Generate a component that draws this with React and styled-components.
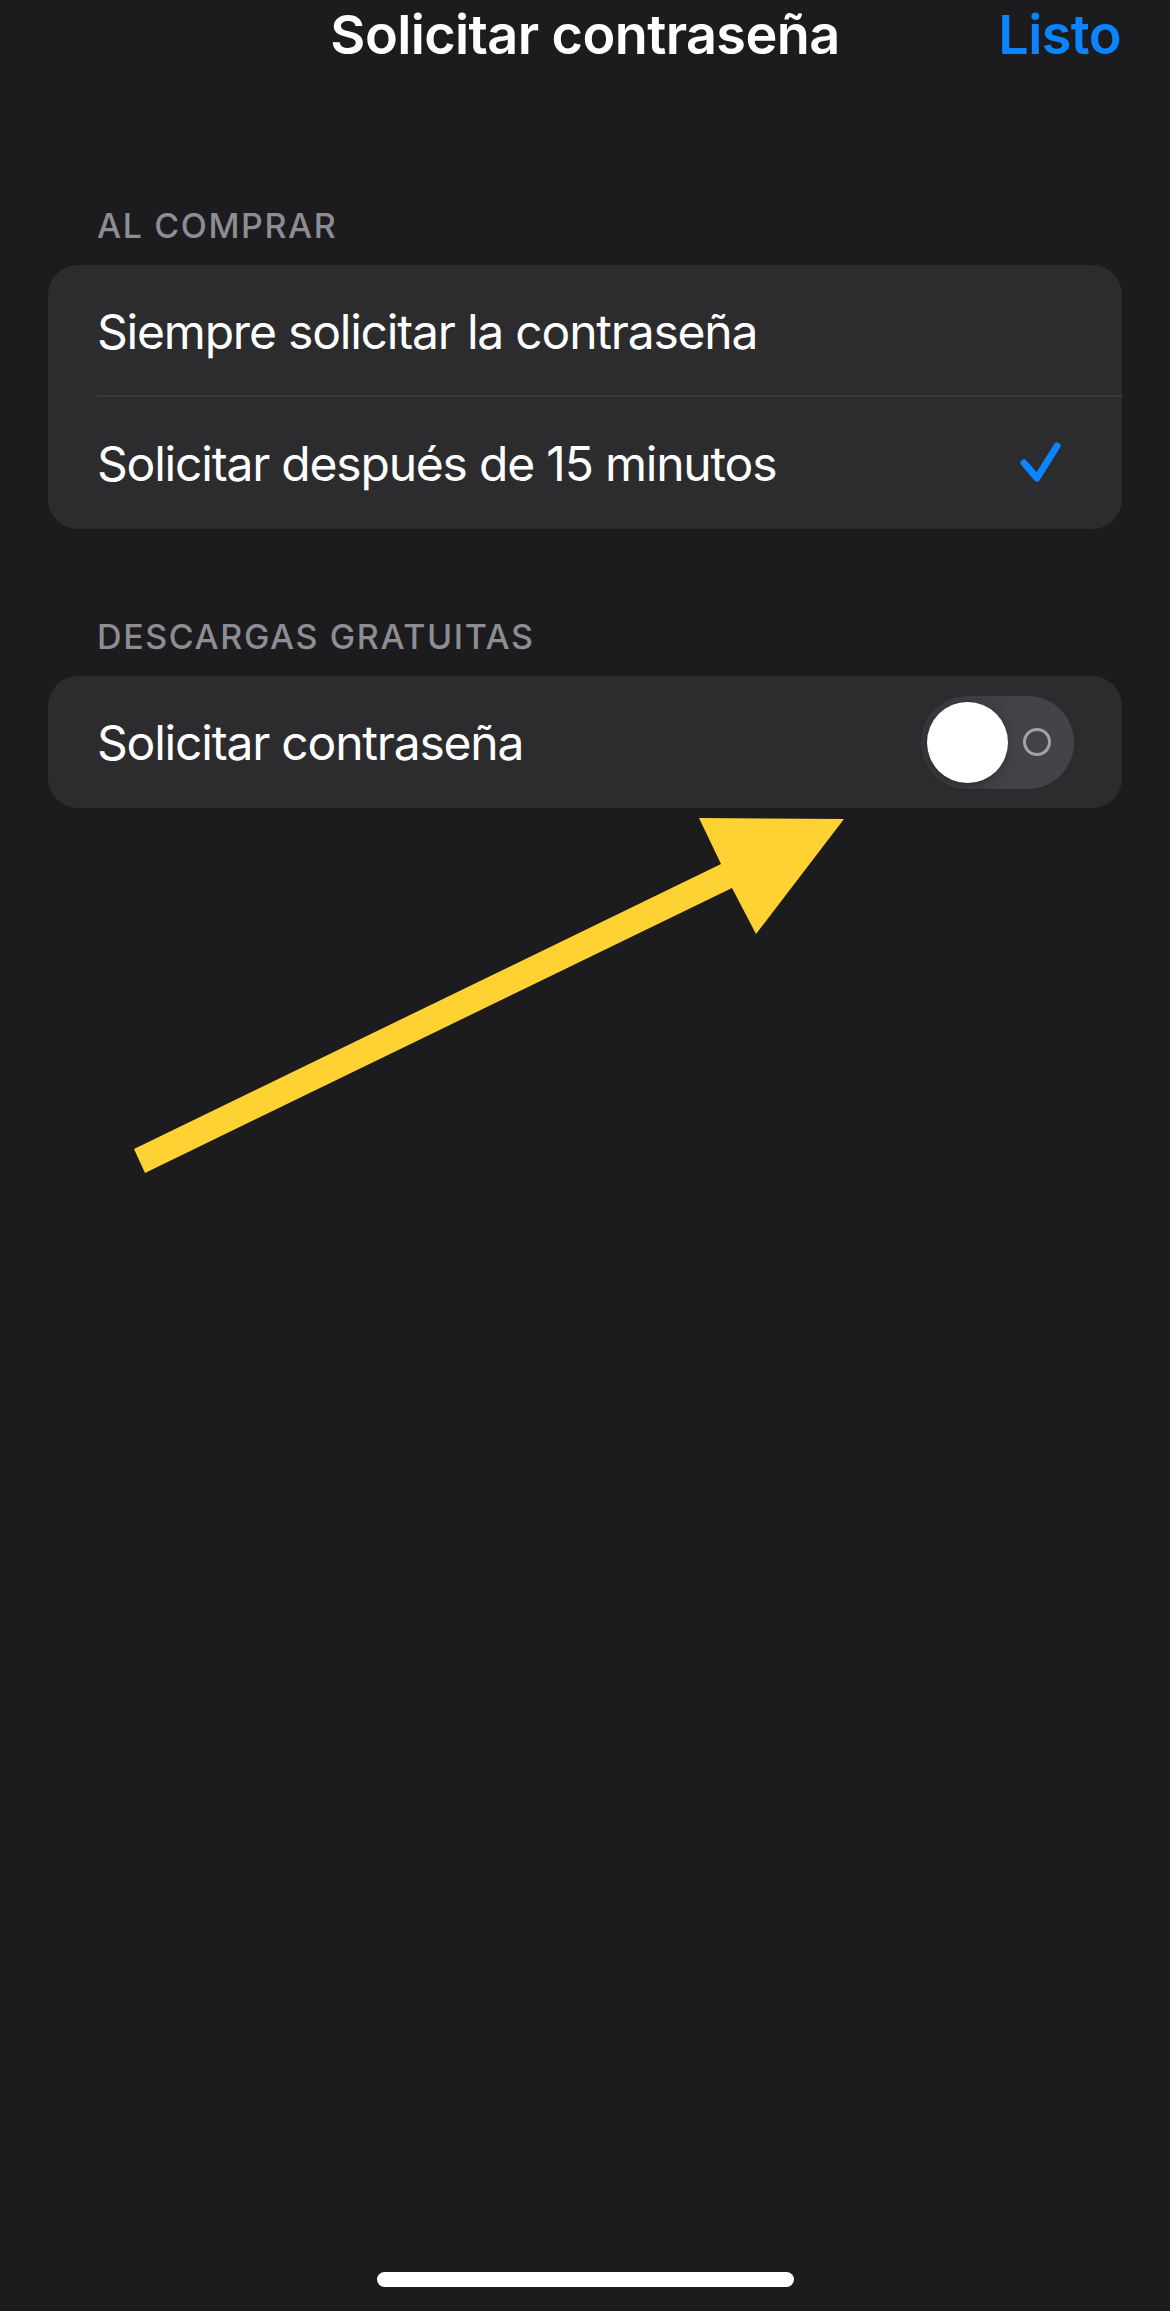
import React from "react";
import styled, { createGlobalStyle } from "styled-components";

const GlobalStyle = createGlobalStyle`
  html, body {
    margin: 0;
    padding: 0;
    background: #1c1c1e;
  }
  body {
    font-family: Inter, "Noto Sans", "Liberation Sans", sans-serif;
    -webkit-font-smoothing: antialiased;
  }
`;

const Screen = styled.div`
  position: relative;
  width: 1170px;
  min-height: 2311px;
  display: flex;
  flex-direction: column;
  background: #1c1c1e;
  overflow: hidden;
`;

const NavBar = styled.header`
  height: 68px;
  display: grid;
  grid-template-columns: 1fr auto 1fr;
  align-items: center;
  padding: 0 49px;
`;

const NavTitle = styled.h1`
  grid-column: 2;
  margin: 0;
  font-size: 54px;
  font-weight: 600;
  letter-spacing: -0.6px;
  color: #ffffff;
  line-height: normal;
`;

const NavAction = styled.button`
  grid-column: 3;
  justify-self: end;
  background: none;
  border: 0;
  padding: 0;
  font-family: inherit;
  font-size: 54px;
  font-weight: 600;
  letter-spacing: -0.6px;
  color: #0a84ff;
  line-height: normal;
`;

const Content = styled.main`
  display: flex;
  flex-direction: column;
  padding: 0 48px;
`;

const SectionHeader = styled.h2`
  margin: ${(p) => p.$top}px 0 19px;
  padding-left: 49px;
  font-size: 34px;
  line-height: 41px;
  font-weight: 500;
  letter-spacing: 1.6px;
  color: #8d8d93;
  text-transform: uppercase;
`;

const Card = styled.section`
  background: #2c2c2e;
  border-radius: 30px;
  overflow: hidden;
`;

const Row = styled.div`
  position: relative;
  height: 132px;
  display: flex;
  align-items: center;
  justify-content: space-between;
  padding: 0 ${(p) => p.$right || 48}px 0 49px;

  ${(p) =>
    p.$divider &&
    `
    &::after {
      content: "";
      position: absolute;
      left: 49px;
      right: 0;
      bottom: 0;
      height: 2px;
      background: #3a3a3d;
    }
  `}
`;

const RowLabel = styled.span`
  font-size: 48px;
  font-weight: 400;
  letter-spacing: -1.2px;
  color: #ffffff;
  line-height: normal;
`;

const Track = styled.div`
  width: 153px;
  height: 93px;
  box-sizing: border-box;
  border-radius: 47px;
  background: linear-gradient(90deg, #37373b 0%, #434347 60%, #444448 100%);
  display: flex;
  align-items: center;
  padding: 0 6px;
`;

const Thumb = styled.div`
  width: 81px;
  height: 81px;
  border-radius: 50%;
  background: #ffffff;
  box-shadow: 0 3px 10px rgba(0, 0, 0, 0.18), 0 1px 2px rgba(0, 0, 0, 0.12);
`;

const OffRing = styled.div`
  width: 28px;
  height: 28px;
  box-sizing: border-box;
  margin-left: 15px;
  border: 3.5px solid #a2a2a7;
  border-radius: 50%;
`;

const ArrowOverlay = styled.svg`
  position: absolute;
  left: 0;
  top: 0;
  pointer-events: none;
`;

const HomeIndicator = styled.div`
  margin: auto auto 24px;
  width: 417px;
  height: 15px;
  border-radius: 8px;
  background: #ffffff;
`;

const Check = () => (
  <svg width="44" height="44" viewBox="0 0 44 44" aria-hidden="true">
    <polyline
      points="6,22 19,37 39,5"
      fill="none"
      stroke="#0a84ff"
      strokeWidth="7"
      strokeLinecap="round"
      strokeLinejoin="round"
    />
  </svg>
);

export default function App() {
  return (
    <>
      <GlobalStyle />
      <Screen>
        <NavBar>
          <NavTitle>Solicitar contraseña</NavTitle>
          <NavAction>Listo</NavAction>
        </NavBar>
        <Content>
          <SectionHeader $top={137}>Al comprar</SectionHeader>
          <Card>
            <Row $divider>
              <RowLabel>Siempre solicitar la contraseña</RowLabel>
            </Row>
            <Row $right={60}>
              <RowLabel>Solicitar después de 15 minutos</RowLabel>
              <Check />
            </Row>
          </Card>
          <SectionHeader $top={87}>Descargas gratuitas</SectionHeader>
          <Card>
            <Row>
              <RowLabel>Solicitar contraseña</RowLabel>
              <Track role="switch" aria-checked="false">
                <Thumb />
                <OffRing />
              </Track>
            </Row>
          </Card>
        </Content>
        <HomeIndicator />
        <ArrowOverlay width="1170" height="1200" viewBox="0 0 1170 1200">
          <polygon
            points="134,1149 721,864 699,818 844,819 756,934 732,888 145,1173"
            fill="#fed233"
          />
        </ArrowOverlay>
      </Screen>
    </>
  );
}
